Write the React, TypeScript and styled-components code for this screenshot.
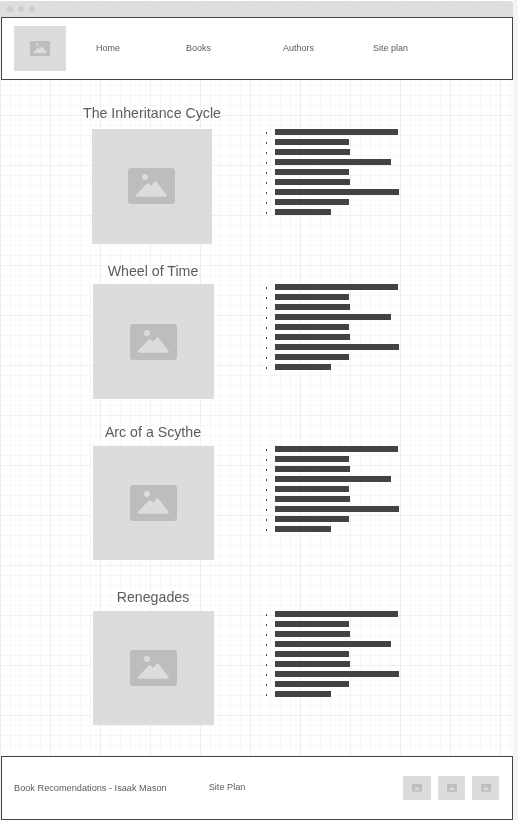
import * as React from 'react'
import styled, { createGlobalStyle, css } from 'styled-components'

const GlobalStyle = createGlobalStyle`
  html, body {
    margin: 0;
    padding: 0;
    background: #f5f5f5;
  }
  * {
    box-sizing: border-box;
  }
`

const softText = css`
  color: #5c5c5c;
  will-change: opacity;
`

const Page = styled.div`
  width: 518px;
  height: 820px;
  overflow: hidden;
  font-family: 'Liberation Sans', Arial, sans-serif;
`

const Browser = styled.div`
  display: flex;
  flex-direction: column;
  width: 513px;
  height: 820px;
  padding: 1px 0 0 1px;
  background-color: #fff;
  background-image:
    linear-gradient(#f0f0f0 1px, transparent 1px),
    linear-gradient(90deg, #f0f0f0 1px, transparent 1px),
    linear-gradient(#f7f7f7 1px, transparent 1px),
    linear-gradient(90deg, #f7f7f7 1px, transparent 1px);
  background-size: 50px 50px, 50px 50px, 10px 10px, 10px 10px;
  background-position: 0 15px, 0 15px, 0 5px, 0 5px;
`

const TitleBar = styled.div`
  display: flex;
  align-items: center;
  gap: 5px;
  flex: 0 0 16px;
  padding-left: 7px;
  margin-left: -1px;
  background: #dedede;
  border-radius: 3px 3px 0 0;
`

const Dot = styled.span`
  width: 6px;
  height: 6px;
  border-radius: 50%;
  background: #cdcdcd;
`

const Header = styled.header`
  display: flex;
  align-items: center;
  flex: 0 0 63px;
  width: 512px;
  padding-left: 12px;
  background: #fff;
  border: 1px solid #444;
`

const Placeholder = styled.div<{ $w: number; $h: number; $nudge?: number }>`
  display: flex;
  align-items: center;
  justify-content: center;
  flex: none;
  width: ${({ $w }) => $w}px;
  height: ${({ $h }) => $h}px;
  padding: 0 ${({ $nudge = 0 }) => $nudge}px ${({ $nudge = 0 }) => $nudge}px 0;
  background: #dcdcdc;
`

const Nav = styled.nav`
  display: grid;
  grid-template-columns: 90px 97px 90px auto;
  margin: -2px 0 0 30px;
`

const NavItem = styled.a`
  ${softText}
  font-size: 9px;
  line-height: 12px;
`

const Main = styled.main`
  flex: 1;
  display: flex;
  flex-direction: column;
`

const Section = styled.section<{ $top: number; $left: number }>`
  display: grid;
  grid-template-columns: 182px auto;
  margin-top: ${({ $top }) => $top}px;
  padding-left: ${({ $left }) => $left}px;
`

const Book = styled.div`
  display: flex;
  flex-direction: column;
  align-items: center;
`

const BookTitle = styled.h2<{ $gap: number }>`
  ${softText}
  margin: 0 0 ${({ $gap }) => $gap}px;
  font-size: 14.2px;
  line-height: 17px;
  font-weight: 400;
  white-space: nowrap;
`

const Bars = styled.ul<{ $top: number; $shift: number }>`
  list-style: none;
  margin: ${({ $top }) => $top}px 0 0;
  padding: 0 0 0 ${({ $shift }) => $shift}px;
`

const BarRow = styled.li`
  position: relative;
  height: 10px;
  padding-left: 9px;

  &::before {
    content: '';
    position: absolute;
    left: 0;
    top: 3px;
    width: 1px;
    height: 2px;
    background: #444;
  }
`

const Bar = styled.div`
  height: 6px;
  background: #434343;
`

const Footer = styled.footer`
  display: flex;
  align-items: center;
  flex: 0 0 64px;
  width: 512px;
  padding: 0 13px 0 12px;
  background: #fff;
  border: 1px solid #444;
`

const FooterText = styled.span`
  ${softText}
  font-size: 9.2px;
  line-height: 12px;
`

const FooterLink = styled(FooterText)`
  margin: -2px 0 0 42px;
`

const Social = styled.div`
  display: flex;
  gap: 7px;
  margin-left: auto;
`

const ImageIcon = ({ size }: { size: number }) => (
  <svg width={size} height={(size * 36) / 47} viewBox="0 0 47 36">
    <rect width="47" height="36" rx="3" fill="#bdbdbd" />
    <circle cx="17" cy="9" r="3" fill="#dcdcdc" />
    <path
      d="M9 27.500 L19.500 16.500 L23 19.500 L27.500 14.500 L37.500 27.500 Z"
      fill="#dcdcdc"
      stroke="#dcdcdc"
      strokeWidth="2.500"
      strokeLinejoin="round"
    />
  </svg>
)

const navItems = ['Home', 'Books', 'Authors', 'Site plan']

const barWidths = [123, 74, 75, 116, 74, 75, 124, 74, 56]

const socialWidths = [28, 27, 27]

const books = [
  { title: 'The Inheritance Cycle', top: 25, left: 60, gap: 7, w: 120, h: 115, shift: 23, nudge: 1 },
  { title: 'Wheel of Time', top: 19, left: 61, gap: 4, w: 121, h: 115, shift: 22, nudge: 0 },
  { title: 'Arc of a Scythe', top: 25, left: 61, gap: 5, w: 121, h: 114, shift: 22, nudge: 0 },
  { title: 'Renegades', top: 29, left: 61, gap: 5, w: 121, h: 114, shift: 22, nudge: 0 }
]

export default function App() {
  return (
    <Page>
      <GlobalStyle />
      <Browser>
        <TitleBar>
          <Dot />
          <Dot />
          <Dot />
        </TitleBar>
        <Header>
          <Placeholder $w={52} $h={45}>
            <ImageIcon size={20} />
          </Placeholder>
          <Nav>
            {navItems.map((item) => (
              <NavItem key={item}>{item}</NavItem>
            ))}
          </Nav>
        </Header>
        <Main>
          {books.map((book) => (
            <Section key={book.title} $top={book.top} $left={book.left}>
              <Book>
                <BookTitle $gap={book.gap}>{book.title}</BookTitle>
                <Placeholder $w={book.w} $h={book.h} $nudge={book.nudge}>
                  <ImageIcon size={47} />
                </Placeholder>
              </Book>
              <Bars $top={17 + book.gap} $shift={book.shift}>
                {barWidths.map((width, i) => (
                  <BarRow key={i}>
                    <Bar style={{ width }} />
                  </BarRow>
                ))}
              </Bars>
            </Section>
          ))}
        </Main>
        <Footer>
          <FooterText>Book Recomendations - Isaak Mason</FooterText>
          <FooterLink>Site Plan</FooterLink>
          <Social>
            {socialWidths.map((width, i) => (
              <Placeholder key={i} $w={width} $h={24}>
                <ImageIcon size={10} />
              </Placeholder>
            ))}
          </Social>
        </Footer>
      </Browser>
    </Page>
  )
}
